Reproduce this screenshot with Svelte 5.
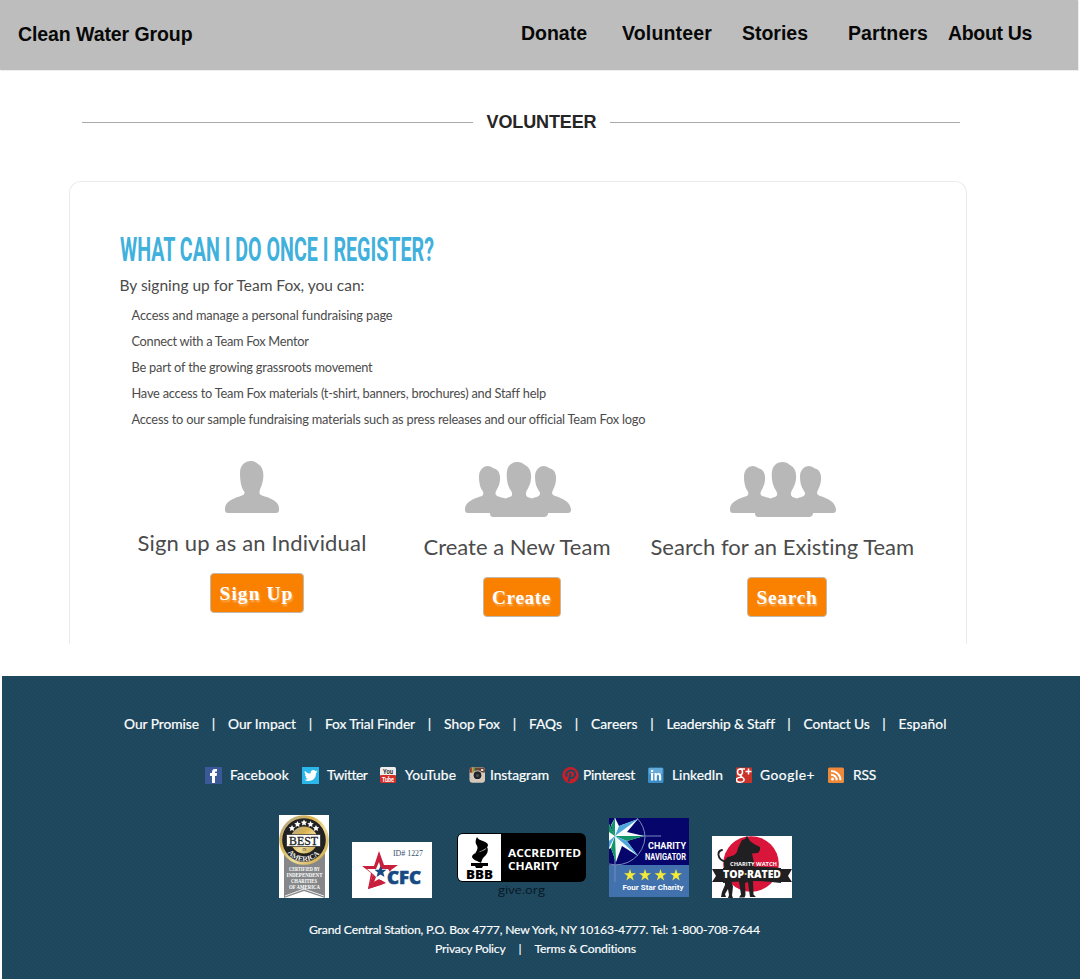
<script>
  // Tracks text out or in so that it fills the measure given in pixels.
  function fit(node, width) {
    const natural = node.getBoundingClientRect().width;
    const count = node.textContent.length;
    node.style.letterSpacing = (width - natural) / count + 'px';
    node.style.width = width + 'px';
  }
  // Condenses display type to the measure given in pixels.
  function condense(node, width) {
    const natural = node.getBoundingClientRect().width;
    node.style.transform = `scaleX(${width / natural})`;
  }

  const nav = [
    ['Donate', 66, 35], ['Volunteer', 90, 30], ['Stories', 66, 40],
    ['Partners', 80, 20], ['About Us', 84, 0]
  ];
  const perks = [
    ['Access and manage a personal fundraising page', 261],
    ['Connect with a Team Fox Mentor', 177],
    ['Be part of the growing grassroots movement', 241],
    ['Have access to Team Fox materials (t-shirt, banners, brochures) and Staff help', 414],
    ['Access to our sample fundraising materials such as press releases and our official Team Fox logo', 513]
  ];
  const options = [
    { title: 'Sign up as an Individual', w: 229, team: false, label: 'Sign Up', lw: 74, bw: 94 },
    { title: 'Create a New Team', w: 187, team: true, label: 'Create', lw: 59, bw: 78 },
    { title: 'Search for an Existing Team', w: 264, team: true, label: 'Search', lw: 61, bw: 80 }
  ];
  const links = [
    ['Our Promise', 75], ['Our Impact', 68], ['Fox Trial Finder', 90], ['Shop Fox', 56], ['FAQs', 33],
    ['Careers', 46.5], ['Leadership & Staff', 108], ['Contact Us', 66], ['Español', 48]
  ];
  const social = [
    ['facebook', 'Facebook', 59, 8, 13], ['twitter', 'Twitter', 40, 8, 13], ['youtube', 'YouTube', 51, 8, 13],
    ['instagram', 'Instagram', 59, 4, 13], ['pinterest', 'Pinterest', 52, 4, 13], ['linkedin', 'LinkedIn', 51, 7, 13],
    ['google', 'Google+', 55, 7, 13], ['rss', 'RSS', 23, 8, 0]
  ];
</script>

<header>
  <span class="brand"><span class="t" use:fit={174.5}>Clean Water Group</span></span>
  <nav>
    {#each nav as [label, w, gap]}
      <span class="t" style:margin-right="{gap}px" use:fit={w}>{label}</span>
    {/each}
  </nav>
</header>

<div class="rule"><i></i><h1><span class="t" use:fit={110}>VOLUNTEER</span></h1><i></i></div>

<main>
  <h2><span class="t" use:condense={314}>WHAT CAN I DO ONCE I REGISTER?</span></h2>
  <p><span class="t" use:fit={245}>By signing up for Team Fox, you can:</span></p>
  <ul>
    {#each perks as [text, w]}<li><span class="t" use:fit={w}>{text}</span></li>{/each}
  </ul>
  <section>
    {#each options as o}
      <article class:team={o.team} style:width="{o.w}px">
        {#if o.team}
          <svg width="106" height="55" viewBox="0 0 106 55" fill="#b8b8b8">
            <path d="M0 48C-1 40 10 36 17 34Q19 33 18 29.500C15 26 14 20 14 15C14 8 18 4 23 4Q26 4 29 6.500C35 8 36 15 34.500 21C33.500 26 31 28 30.500 31C30 35 37 35 40.500 36.500L46 34.500Q48 33 46.500 29.500C43 25 41.700 19 41.700 13C41.700 4 46 0 53 0Q57 0 60 3C66 6 67 13 65.500 20C64 26 61.500 28 61 31Q60.500 34 62.500 35L67 36.500C70 35 75 35 75 31.500Q75 30 74 29C71 25 70 20 70 15C70 8 74 4 79 4Q82 4 85 6.500C91 8 92 15 90.500 21C89.500 26 87.500 28 87 31Q87 33 90 34C97 36 106 40 106 48Q106 51 103 51H83V52Q82 55 79 55H28Q25 55 25 51H3Q0 51 0 48Z" />
          </svg>
        {:else}
          <svg class="single" width="54" height="52" viewBox="0 0 54 52" fill="#b8b8b8">
            <path d="M0 49C-1 40 10 37 17 34.500Q20 34 19.500 31C16 27 15 19 15 12C15 4 20 0 26 0Q30 0 33 3C38 6 39 12 38 19C37 25 35 27 34.500 31Q34 34 37 34.500C45 37 55 40 54 49Q54 52 51 52H3Q0 52 0 49Z" />
          </svg>
        {/if}
        <h3><span class="t" use:fit={o.w}>{o.title}</span></h3>
        <button style:width="{o.bw}px"><span class="t" use:fit={o.lw}>{o.label}</span></button>
      </article>
    {/each}
  </section>
</main>

<footer>
  <div class="links">
    {#each links as [label, w], i}
      {#if i}<b>|</b>{/if}<span class="t" use:fit={w}>{label}</span>
    {/each}
  </div>

  <div class="social">
    {#each social as [icon, label, w, pad, gap]}
      <svg width="17" height="17" viewBox="0 0 17 17">
        {#if icon === 'facebook'}
          <path fill="#3b5998" d="M0 0h17v17H0z" /><path fill="#fff" d="M7 16V9H5V6h2V5c0-2 1-3 3-3h2v2.500h-1c-1 0-1 .5-1 1.500h2l-.3 3H10v7z" />
        {:else if icon === 'twitter'}
          <path fill="#2cb7ea" d="M0 0h17v17H0z" /><path fill="#fff" d="M3 4c2 2 3 2.500 5.500 2.500C8 3 12 2 13.300 4l2-.6-1 1.500 1.200-.1-1.500 1.500c0 8-8 9-11.500 6.500 1.500 0 2.500-.3 3.300-1C4.500 11.500 4 11 3.600 10H5C3.500 9.500 3 8.500 3 7.400l1 .3C2.500 6.500 2.300 5 3 4z" />
        {:else if icon === 'youtube'}
          <rect y="0" width="16" height="9" rx="1.500" fill="#eee" /><rect y="8" width="16" height="8" rx="1.500" fill="#d7302b" />
          <text x="3" y="6.800" font-size="7" font-weight="700" fill="#333" textLength="10" lengthAdjust="spacingAndGlyphs">You</text>
          <text x="2" y="14.500" font-size="7" font-weight="700" fill="#fff" textLength="12" lengthAdjust="spacingAndGlyphs">Tube</text>
        {:else if icon === 'instagram'}
          <rect x=".5" y=".3" width="15.500" height="15.500" rx="3" fill="#d6c8b8" />
          <path fill="#6b4635" d="M.5 5.500v-2q0-3 3-3h9.500q3 0 3 3v2z" /><path fill="#c33" d="M2 .8h1.300v4.700H2z" /><path fill="#dc4" d="M3.300.5h1.300v5H3.300z" /><path fill="#4a6" d="M4.600.5h1.200v5H4.600z" />
          <circle cx="8.500" cy="8.200" r="4.800" fill="#eee" /><circle cx="8.500" cy="8.200" r="4" fill="#252525" /><circle cx="8.500" cy="8.500" r="1.600" fill="#465058" /><path fill="#ddd" d="M12 2h2.300v2H12z" />
        {:else if icon === 'pinterest'}
          <circle cx="8.500" cy="8.200" r="8.200" fill="#c51f2a" /><path fill="none" stroke="#1f4860" stroke-width="1.900" d="M6.600 14.800 8.700 6.300M5 9.500C3.200 7 5 3.500 8.700 3.500s5.300 2.700 4 5.300S8.300 11.500 7.800 10" />
        {:else if icon === 'linkedin'}
          <rect y=".5" width="15.500" height="15.500" rx="1.500" fill="#3c8ec8" /><path fill="#65abd9" d="M1 1h13.500v6H1z" />
          <path fill="#fff" d="M3 6h2.200v7.500H3zM3 3h2.200v2H3zM6.500 6h2v1c1.200-1.800 4.700-1.500 4.700 1.700v4.800H11V9.200c0-2-2.200-2-2.200 0v4.300H6.500z" />
        {:else if icon === 'google'}
          <path fill="#c9332b" d="M0 .5h16V16H0z" /><g fill="none" stroke="#fff" stroke-width="1.500"><ellipse cx="4" cy="5" rx="2.500" ry="2.900" /><path d="M4 2h5M5.500 7.500C4 9 5 9.500 6.500 10.500 10 13 7 15.300 4 15.300S-.5 13 1 11.500s3-1.300 4.500-1.300M12.500 1.500v6M9.500 4.500h6" /></g>
        {:else}
          <rect y=".5" width="16" height="15.500" rx="1.500" fill="#f0883a" /><circle cx="4.500" cy="12" r="1.500" fill="#fff" /><path fill="none" stroke="#fff" stroke-width="2" d="M3 7.700a5.500 5.500 0 0 1 5.700 5.600M3 4a9.300 9.300 0 0 1 9.500 9.300" />
        {/if}
      </svg>
      <span class="t" style:margin="0 {gap}px 0 {pad}px" use:fit={w}>{label}</span>
    {/each}
  </div>

  <div class="badges">
    <svg width="50" height="83" viewBox="0 0 50 83">
      <defs><linearGradient id="gilt" x2="1" y2="1"><stop stop-color="#a9a9a4" /><stop offset=".35" stop-color="#d8b24c" /><stop offset=".6" stop-color="#f0dc9a" /><stop offset="1" stop-color="#c49a31" /></linearGradient></defs>
      <path fill="#fff" d="M0 0h50v83H0z" /><path fill="#858789" d="M5 38h41v45L25 76 5 83z" /><path stroke="#eee" fill="none" d="M6 81 25 74l20 7" />
      <circle cx="25" cy="25" r="24.800" fill="url(#gilt)" /><circle cx="25" cy="25" r="21.800" fill="#222" /><circle cx="25" cy="25" r="13.500" fill="url(#gilt)" />
      <path fill="#fff" stroke="#222" stroke-width=".7" d="M7.500 19.500h34v12h-34z" />
      <text class="serif" x="10" y="30" font-size="13" fill="#222" stroke="#222" stroke-width=".3" textLength="29" lengthAdjust="spacingAndGlyphs">BEST</text>
      <g fill="#fff"><path id="star" d="m25 4.500 1 2 2.200.3-1.600 1.500.4 2.200-2-1-2 1 .4-2.200-1.600-1.500 2.200-.3z" /><use href="#star" x="-6.500" y="1.500" /><use href="#star" x="6.500" y="1.500" /><use href="#star" x="-12" y="5.500" /><use href="#star" x="12" y="5.500" /></g>
      <path id="arc" d="M7.500 36A20 20 0 0 0 42.500 36" fill="none" /><text class="serif" font-size="7.500" font-weight="700" fill="#eee"><textPath href="#arc" startOffset="2" textLength="37" lengthAdjust="spacingAndGlyphs">AMERICA</textPath></text>
      <text class="serif" x="23.500" y="35.500" font-size="3.500" fill="#222">IN</text>
      <g class="serif" font-size="5.300" font-weight="700" fill="#fff"><text x="10" y="55.500" textLength="31" lengthAdjust="spacingAndGlyphs">CERTIFIED BY</text><text x="7.500" y="62.300" textLength="36" lengthAdjust="spacingAndGlyphs">INDEPENDENT</text><text x="12" y="68.300" textLength="26" lengthAdjust="spacingAndGlyphs">CHARITIES</text><text x="10" y="74" textLength="31" lengthAdjust="spacingAndGlyphs">OF AMERICA</text></g>
    </svg>

    <svg width="80" height="56" viewBox="0 0 80 56">
      <path fill="#fff" d="M0 0h80v56H0z" />
      <path fill="#c8203c" fill-rule="evenodd" d="m27 9 5 14h14l-7 5-1 2-2-3h-7l-2-7-3 7h-9l6 5-3 10 9-5 6 4-4 2-13 4 3-16L10 24h12z" />
      <path fill="#c8203c" d="m16 47 5-15 3 3-3 8 8-5 5 3z" />
      <path fill="#174a82" d="m28.500 24 1.700 3.800h4.300l-3.300 2.800 1.300 4.300-4-2.400-4 2.400 1.300-4.300-3.300-2.800h4.300z" />
      <text class="sans" x="35" y="42" font-size="17" font-weight="800" fill="#174a82" stroke="#174a82" stroke-width=".6" textLength="34" lengthAdjust="spacingAndGlyphs">CFC</text>
      <text class="serif" x="41" y="14" font-size="8" fill="#36516e" textLength="30" lengthAdjust="spacingAndGlyphs">ID# 1227</text>
    </svg>

    <svg width="130" height="65" viewBox="0 0 130 65">
      <rect width="129" height="49" rx="6" fill="#000" /><path fill="#fff" d="M6 1h38v47H6q-5 0-5-5V6q0-5 5-5z" />
      <path d="M20 4c1 4 11 4 11 8 0 3-5 5-9 7l-4 2c2-4 4-6 1-10-1-3 0-5 1-7zM30 14c2 3 0 8-3 10-2 2-2 3-3 6-3-2-8-3-9-6 0-4 6-4 10-6 3-1 4-2 5-4zM14 30h17v3h-5l-1 2h-6l-1-2h-4z" />
      <text class="sans" x="9" y="46" font-size="12" font-weight="800" textLength="27" lengthAdjust="spacingAndGlyphs">BBB</text>
      <g class="sans" font-size="10.500" font-weight="700" fill="#fff"><text x="51" y="24" textLength="73" lengthAdjust="spacingAndGlyphs">ACCREDITED</text><text x="51" y="37" textLength="51" lengthAdjust="spacingAndGlyphs">CHARITY</text></g>
      <text class="sans" x="41" y="61" font-size="11.500" fill="#051622" textLength="47" lengthAdjust="spacingAndGlyphs">give.org</text>
    </svg>

    <svg width="80" height="79" viewBox="0 0 80 79">
      <path fill="#06056b" d="M0 0h80v48H0z" /><path fill="#4272ad" d="M0 47h80v32H0z" />
      <g fill="none" stroke="#778abc"><path d="M0 46A29 29 0 0 0 36 19 29 29 0 0 0 28 0M6 0v64M0 18h52" /></g>
      <path fill="#f4fbfa" d="M6 18 2 7 6 0l4 8 19-7-11 13 17 4-17 5 11 15-16-10-6 16-5-14-2 1V6z" />
      <path fill="#119468" d="M6 18V0L2 8zM6 18h29l-17 5zM6 18l1 26-5-14zM0 6l6 12-6-4z" /><path fill="#4fa8db" d="M6 18 29 1 10 8zM6 18l23 20-11-15zM6 18 0 30v-7z" />
      <g class="nav-text" fill="#fff" font-weight="700"><text x="39" y="31" font-size="9.500" textLength="38" lengthAdjust="spacingAndGlyphs">CHARITY</text><text x="36" y="41.500" font-size="9" textLength="41" lengthAdjust="spacingAndGlyphs">NAVIGATOR</text><text x="13.500" y="72" font-size="8" textLength="61" lengthAdjust="spacingAndGlyphs">Four Star Charity</text></g>
      <g fill="#f5ea35"><path id="gold" d="m21 51 1.400 4.200 4.600.1-3.700 2.700 1.400 4.400-3.700-2.700-3.700 2.700 1.400-4.400-3.700-2.700 4.600-.1z" /><use href="#gold" x="15" /><use href="#gold" x="30.500" /><use href="#gold" x="46" /></g>
    </svg>

    <svg width="80" height="62" viewBox="0 0 80 62">
      <path fill="#fff" d="M0 0h80v62H0z" /><circle cx="39" cy="28" r="27.800" fill="#d9153a" />
      <path fill="#202022" d="M30 4 33 3 35 0l3 5 4 3 6 3v3l-2 3-6 .5 2 9-1 18 .5 14 2.500 2.500h-6L36 46l-3 1 .5 12-1 2.500H27l2-3-2-13-8-1 2 6-1 9 1 2.500h-5l1-3-1-6-3 5 1 3H9l1-5 3-7-1-22q1-6 6-6.500 5-1 7-4.500 1-5 3-8z" />
      <path fill="none" stroke="#202022" stroke-width="1.900" stroke-linecap="round" d="M14 26Q7 24 6.500 19 6 15 10 14" />
      <path fill="#202022" d="M0 33h12v13H0l4-6zM80 33H68v13h12l-4-6z" />
      <path fill="#202022" d="M11 32q29-3 58 0v15q-29-4-58 0z" />
      <g class="sans" fill="#fff" font-weight="700"><text x="18" y="30" font-size="6" textLength="47" lengthAdjust="spacingAndGlyphs">CHARITY WATCH</text><text x="11" y="41.500" font-size="11" font-weight="800" textLength="58" lengthAdjust="spacingAndGlyphs">TOP<tspan fill="#e5c34a">·</tspan>RATED</text></g>
    </svg>
  </div>

  <address><span class="t" use:fit={451}>Grand Central Station, P.O. Box 4777, New York, NY 10163-4777. Tel: 1-800-708-7644</span></address>
  <div class="legal"><span class="t" use:fit={70.5}>Privacy Policy</span><b>|</b><span class="t" use:fit={101.5}>Terms &amp; Conditions</span></div>
</footer>

<style>
  :global(body) { background: #fff; width: 1080px; overflow: hidden; }
  h1, h2, h3, p, ul { margin: 0; padding: 0; }
  svg { display: block; flex: none; }
  .t { display: inline-block; white-space: nowrap; }
  header { box-sizing: border-box; width: 1078px; height: 70px; background: #bdbdbd; display: flex; justify-content: space-between; padding: 0 46px 0 18px; font: bold 19.5px/67px "Liberation Sans", Arial, sans-serif; color: #080808; box-shadow: 1px 1px #eee; }
  .brand { line-height: 68px; }
  nav { display: flex; }
  .rule { display: grid; grid-template-columns: 391px 110px 350px; column-gap: 13.5px; align-items: center; height: 24px; margin: 40px 0 47px 82px; }
  .rule i { height: 1px; background: #aaa; position: relative; top: .5px; }
  h1 { font: bold 18px/24px "Liberation Sans", Arial, sans-serif; color: #252525; }
  main { box-sizing: border-box; width: 898px; height: 463px; margin-left: 69px; border: 1px solid #ebebeb; border-bottom: 0; border-radius: 12px 12px 0 0; padding: 47px 0 0 50px; font-family: Lato, sans-serif; color: #4b4b4b; }
  h2 { font: bold 33px/41px Roboto, sans-serif; color: #40b0dc; height: 40px; }
  h2 .t { transform-origin: left; }
  p { font-size: 15.5px; line-height: 20px; margin: 6px 0 0 -.5px; }
  ul { list-style: none; margin: 7px 0 0 11.5px; font-size: 12.8px; line-height: 26px; }
  li { height: 26px; }
  section { display: flex; margin: 29px 0 0 17.5px; }
  article { display: flex; flex-direction: column; align-items: center; gap: 15px; }
  article.team { margin: 1px 0 0 57px; }
  article.team + article.team { margin-left: 40px; }
  .single { margin-right: 1px; }
  .team svg { margin-right: -1px; }
  h3 { font-size: 22px; line-height: 30px; height: 30px; font-weight: 400; }
  button { box-sizing: border-box; height: 40px; margin-left: 9px; padding: 0; border: 1px solid #c2b9ac; border-radius: 4px; background: #fa8100; color: #fff; font: bold 19.5px/39px "Liberation Serif", serif; text-shadow: 1px 2px 2px #ffffff66; }
  footer { box-sizing: border-box; margin: 32px 0 0 2px; height: 303px; background: repeating-conic-gradient(#1d475d 0 25%, #20495f 0 50%) 0 0 / 4px 4px; color: #fff; font-family: Lato, sans-serif; padding-top: 38px; }
  .links, .social, .badges, .legal { display: flex; }
  .links, .social { font-size: 13.8px; -webkit-text-stroke: .2px #fff; }
  .social text { -webkit-text-stroke: 0; font-family: Roboto, sans-serif; }
  .links { margin-left: 122px; line-height: 20px; height: 20px; }
  b { font-weight: 400; width: 29px; text-align: center; }
  .social { margin: 30px 0 0 203px; height: 22px; line-height: 22px; align-items: center; }
  .badges { margin: 29px 0 0 277px; height: 83px; align-items: flex-end; }
  .badges svg:nth-child(2) { margin-left: 23px; }
  .badges svg:nth-child(3) { margin-left: 25px; }
  .badges svg:nth-child(4) { margin: 0 23px 1px 22px; }
  .serif { font-family: "Liberation Serif", serif; }
  .sans { font-family: "Open Sans", sans-serif; }
  .nav-text { font-family: Roboto, sans-serif; }
  address { margin: 22px 0 0 307px; font-style: normal; font-size: 12.2px; line-height: 20px; height: 20px; -webkit-text-stroke: .15px #fff; }
  .legal { margin: -1px 0 0 433px; font-size: 12.2px; line-height: 20px; -webkit-text-stroke: .15px #fff; }
</style>
